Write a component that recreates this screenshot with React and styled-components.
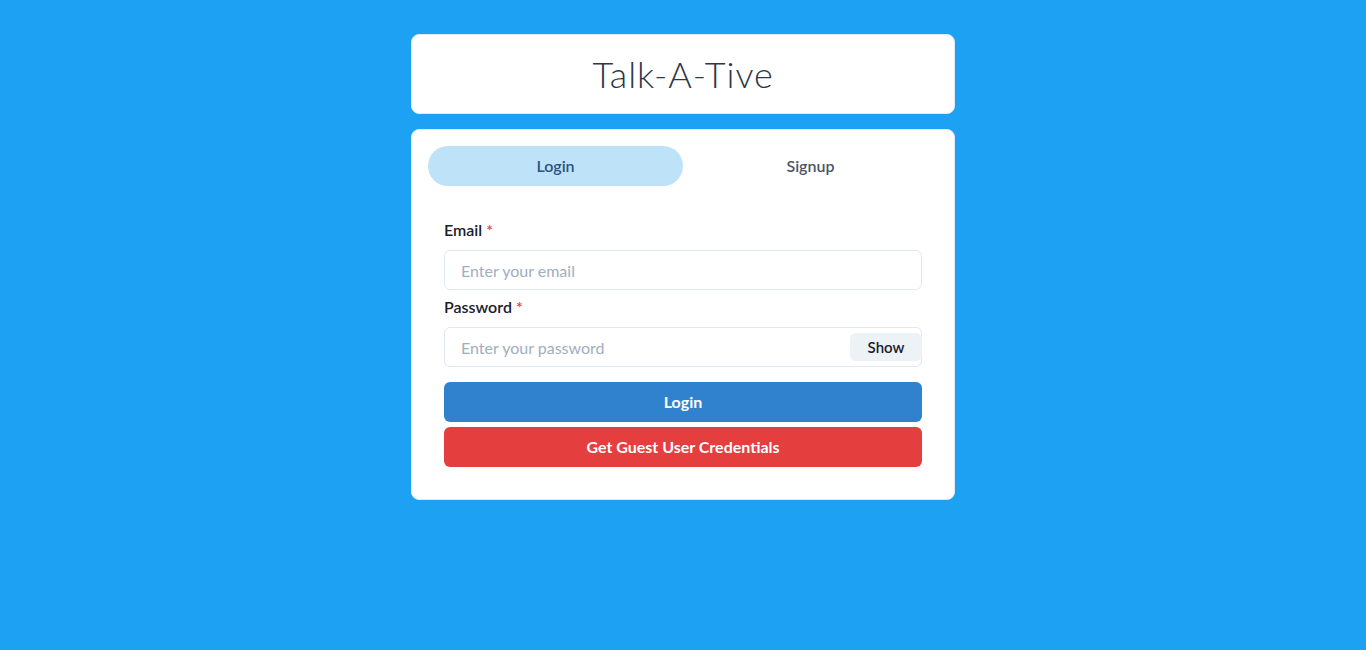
import React, { useState } from "react";
import styled, { createGlobalStyle } from "styled-components";

const GlobalStyle = createGlobalStyle`
  * { box-sizing: border-box; }
  body {
    margin: 0;
    background: #1DA1F2;
    font-family: "Lato", "Noto Sans", sans-serif;
    color: #1A202C;
  }
`;

const Pagina = styled.div`
  min-height: 650px;
  display: flex;
  justify-content: center;
  padding-top: 34px;
`;

const Container = styled.div`
  width: 576px;
  padding: 0 16px;
  display: flex;
  flex-direction: column;
`;

const Cabecalho = styled.div`
  background: #fff;
  border: 1px solid #E2E8F0;
  border-radius: 8px;
  padding: 12px;
  margin-bottom: 15px;
  display: flex;
  justify-content: center;
`;

const Titulo = styled.h1`
  margin: 0;
  font-family: "Lato", sans-serif;
  font-weight: 300;
  font-size: 36px;
  line-height: 54px;
  letter-spacing: 0.9px;
  color: #2D3748;
`;

const Cartao = styled.div`
  background: #fff;
  border: 1px solid #E2E8F0;
  border-radius: 8px;
  padding: 16px;
`;

const ListaAbas = styled.div`
  display: flex;
  margin-bottom: 16px;
`;

const Aba = styled.button`
  flex: 1;
  height: 40px;
  padding: 0 0 2px;
  border: none;
  border-radius: 9999px;
  font-family: inherit;
  font-size: 16px;
  font-weight: 600;
  cursor: pointer;
  background: ${(p) => (p.$ativa ? "#BEE3F8" : "transparent")};
  color: ${(p) => (p.$ativa ? "#2C5282" : "#4A5568")};
`;

const Painel = styled.div`
  padding: 16px;
  display: flex;
  flex-direction: column;
`;

const Campo = styled.div`
  display: flex;
  flex-direction: column;
  margin-bottom: 5px;
`;

const Rotulo = styled.label`
  font-size: 16px;
  font-weight: 600;
  line-height: 24px;
  margin-bottom: 8px;
  color: #1A202C;

  span {
    color: #E53E3E;
    margin-left: 4px;
  }
`;

const GrupoInput = styled.div`
  position: relative;
  display: flex;
`;

const Entrada = styled.input`
  width: 100%;
  height: 40px;
  border: 1px solid #E2E8F0;
  border-radius: 6px;
  padding: 0 ${(p) => (p.$comBotao ? "72px" : "16px")} 0 16px;
  font-family: inherit;
  font-size: 16px;
  color: #1A202C;
  outline: none;

  &::placeholder {
    color: #A0AEC0;
  }
`;

const BotaoMostrar = styled.button`
  position: absolute;
  right: 0;
  top: 6px;
  width: 72px;
  height: 28px;
  border: none;
  border-radius: 6px;
  background: #EDF2F7;
  color: #1A202C;
  font-family: inherit;
  font-size: 15px;
  font-weight: 600;
  cursor: pointer;
`;

const Botao = styled.button`
  width: 100%;
  height: 40px;
  padding: 0 0 2px;
  border: none;
  border-radius: 6px;
  background: ${(p) => p.$cor};
  color: #fff;
  font-family: inherit;
  font-size: 16px;
  font-weight: 700;
  margin-top: ${(p) => p.$topo || "0"};
  cursor: pointer;
`;

export default function App() {
    const [aba, setAba] = useState("login")
    const [mostrar, setMostrar] = useState(false)

    return (
        <Pagina>
            <GlobalStyle />
            <Container>
                <Cabecalho>
                    <Titulo>Talk-A-Tive</Titulo>
                </Cabecalho>
                <Cartao>
                    <ListaAbas>
                        <Aba $ativa={aba === "login"} onClick={() => setAba("login")}>Login</Aba>
                        <Aba $ativa={aba === "signup"} onClick={() => setAba("signup")}>Signup</Aba>
                    </ListaAbas>
                    <Painel>
                        <Campo>
                            <Rotulo>Email<span>*</span></Rotulo>
                            <Entrada placeholder="Enter your email" />
                        </Campo>
                        <Campo>
                            <Rotulo>Password<span>*</span></Rotulo>
                            <GrupoInput>
                                <Entrada
                                    $comBotao
                                    type={mostrar ? "text" : "password"}
                                    placeholder="Enter your password"
                                />
                                <BotaoMostrar onClick={() => setMostrar(!mostrar)}>
                                    {mostrar ? "Hide" : "Show"}
                                </BotaoMostrar>
                            </GrupoInput>
                        </Campo>
                        <Botao $cor="#3182CE" $topo="10px">Login</Botao>
                        <Botao $cor="#E53E3E" $topo="5px">Get Guest User Credentials</Botao>
                    </Painel>
                </Cartao>
            </Container>
        </Pagina>
    )
}
